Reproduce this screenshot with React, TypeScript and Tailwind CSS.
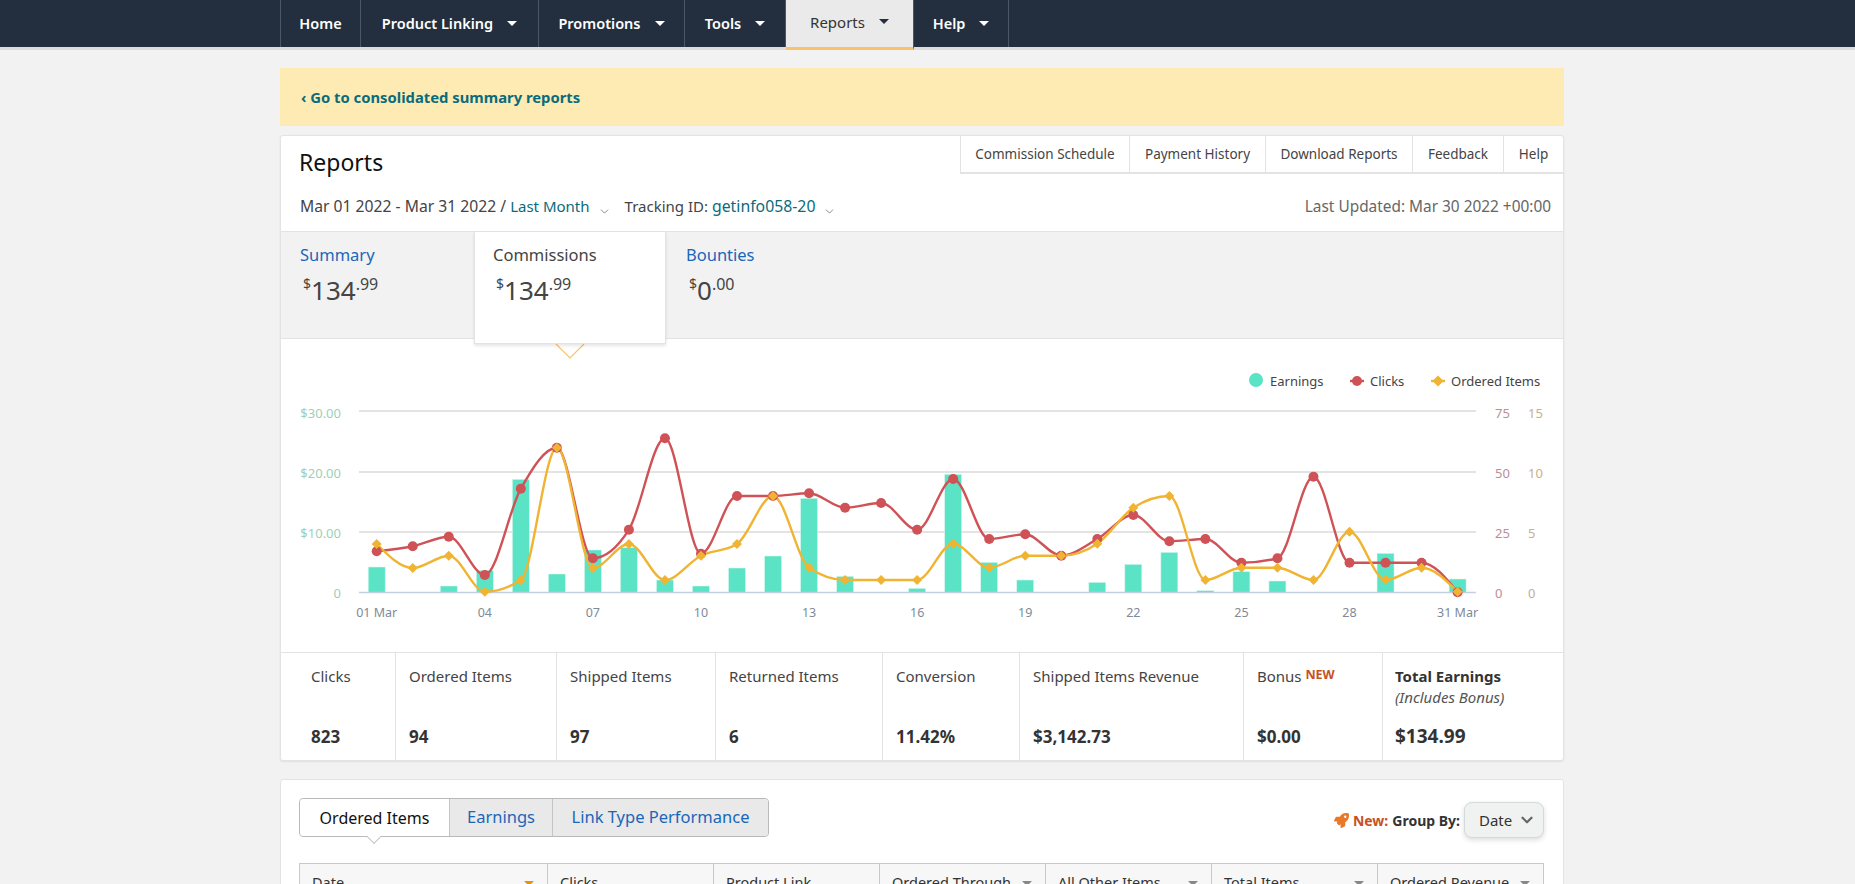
import { ChevronDown } from "lucide-react";
import { FaRocket } from "react-icons/fa";

const navItems = [
  { label: "Home", width: "w-[80px]", caret: false },
  { label: "Product Linking", width: "w-[178px]", caret: true },
  { label: "Promotions", width: "w-[146px]", caret: true },
  { label: "Tools", width: "w-[101px]", caret: true },
  { label: "Reports", width: "w-[128px]", caret: true, active: true },
  { label: "Help", width: "w-[95px]", caret: true },
];

const stats = [
  { label: "Clicks", value: "823", pad: "pl-[30px]" },
  { label: "Ordered Items", value: "94", pad: "pl-[13px]" },
  { label: "Shipped Items", value: "97", pad: "pl-[13px]" },
  { label: "Returned Items", value: "6", pad: "pl-[13px]" },
  { label: "Conversion", value: "11.42%", pad: "pl-[13px]" },
  { label: "Shipped Items Revenue", value: "$3,142.73", pad: "pl-[13px]" },
];

const tableHeads = [
  { label: "Date", width: "w-[248px]", caret: "border-t-[#e6920c]" },
  { label: "Clicks", width: "w-[166px]" },
  { label: "Product Link", width: "w-[166px]" },
  { label: "Ordered Through", width: "w-[166px]", caret: "border-t-[#888]" },
  { label: "All Other Items", width: "w-[166px]", caret: "border-t-[#888]" },
  { label: "Total Items", width: "w-[166px]", caret: "border-t-[#888]" },
  { label: "Ordered Revenue", width: "flex-1", caret: "border-t-[#888]" },
];

// chart numbers are in page pixels, the svg viewBox starts at the chart's corner
const dayX = (i: number) => 376.7 + i * 36.03;
const BASE = 592.3;

const bars = [25.3, 0, 6.3, 22, 113, 18.3, 42.3, 44.7, 12.3, 6.3, 24.3, 36.3, 94, 16, 0, 4, 118, 30, 12.3, 0, 10, 28, 40, 1.7, 20.7, 11.3, 0, 0, 39, 0, 13.3];
const clicks = [551.3, 546.3, 536.7, 575, 488.7, 447.7, 558.3, 529.7, 438.3, 553.7, 496, 496, 493.3, 507.7, 503, 529.7, 479, 539, 534.3, 555.7, 539, 515, 541.3, 539, 562.7, 558.3, 476.7, 562.7, 562.7, 562.7, 592.3];
const ordered = [544, 568, 555.7, 591.7, 580, 447.7, 568, 544, 580, 555.7, 544, 496, 567.7, 580, 580, 580, 543.7, 567.7, 555.7, 555.7, 543.7, 507.7, 496, 580, 567.7, 567.7, 580, 531.7, 580, 567.7, 591.7];

const grid = [411, 472, 532];
const leftAxis = [
  { y: 418, text: "$30.00" },
  { y: 478, text: "$20.00" },
  { y: 538, text: "$10.00" },
  { y: 598, text: "0" },
];
const rightAxis = [
  { y: 418, a: "75", b: "15" },
  { y: 478, a: "50", b: "10" },
  { y: 538, a: "25", b: "5" },
  { y: 598, a: "0", b: "0" },
];
const xLabels = [
  { i: 0, text: "01 Mar" },
  { i: 3, text: "04" },
  { i: 6, text: "07" },
  { i: 9, text: "10" },
  { i: 12, text: "13" },
  { i: 15, text: "16" },
  { i: 18, text: "19" },
  { i: 21, text: "22" },
  { i: 24, text: "25" },
  { i: 27, text: "28" },
  { i: 30, text: "31 Mar" },
];

function monotonePath(ys: number[]) {
  const h = 36.03;
  const slopes = ys.map((y, i) => {
    if (i === 0 || i === ys.length - 1) return 0;
    const s0 = (y - ys[i - 1]) / h;
    const s1 = (ys[i + 1] - y) / h;
    const p = (s0 + s1) / 2;
    return (Math.sign(s0) + Math.sign(s1)) * Math.min(Math.abs(s0), Math.abs(s1), 0.5 * Math.abs(p)) || 0;
  });
  slopes[0] = (3 * (ys[1] - ys[0]) / h - slopes[1]) / 2;
  const n = ys.length - 1;
  slopes[n] = (3 * (ys[n] - ys[n - 1]) / h - slopes[n - 1]) / 2;
  let d = `M${dayX(0)},${ys[0]}`;
  for (let i = 0; i < n; i++) {
    const dx = h / 3;
    d += `C${dayX(i) + dx},${ys[i] + dx * slopes[i]} ${dayX(i + 1) - dx},${ys[i + 1] - dx * slopes[i + 1]} ${dayX(i + 1)},${ys[i + 1]}`;
  }
  return d;
}

function diamond(x: number, y: number, r: number) {
  return `${x},${y - r} ${x + r},${y} ${x},${y + r} ${x - r},${y}`;
}

function Chart() {
  return (
    <svg viewBox="281 339 1282 313" className="block w-[1282px] h-[313px]" fontFamily="'Noto Sans', sans-serif">
      {/* legend */}
      <circle cx="1256" cy="380" r="7" fill="#5ae3c4" />
      <text x="1270" y="386" fontSize="13" fill="#444">Earnings</text>
      <line x1="1350" x2="1364" y1="381" y2="381" stroke="#cf5256" strokeWidth="2.4" />
      <circle cx="1357" cy="381" r="5" fill="#cf5256" />
      <text x="1370" y="386" fontSize="13" fill="#444">Clicks</text>
      <line x1="1431" x2="1445" y1="381" y2="381" stroke="#f0b432" strokeWidth="2.4" />
      <polygon points={diamond(1438, 381, 5.5)} fill="#f0b432" />
      <text x="1451" y="386" fontSize="13" fill="#444">Ordered Items</text>

      {/* grid */}
      {grid.map((y) => (
        <line key={y} x1="359" x2="1476" y1={y} y2={y} stroke="#dadada" strokeWidth="1.5" />
      ))}

      {/* bars */}
      {bars.map((b, i) =>
        b > 0 ? <rect key={i} x={dayX(i) - 8.5} y={BASE - b} width="17" height={b} fill="#5ae3c4" stroke="#d8f7ef" strokeWidth="0.6" /> : null
      )}
      <line x1="359" x2="1476" y1="592.5" y2="592.5" stroke="#c3d0e2" strokeWidth="1.5" />

      {/* lines */}
      <path d={monotonePath(clicks)} fill="none" stroke="#cf5256" strokeWidth="2.4" />
      <path d={monotonePath(ordered)} fill="none" stroke="#f0b432" strokeWidth="2.4" />
      {clicks.map((y, i) => (
        <circle key={i} cx={dayX(i)} cy={y} r="5" fill="#cf5256" />
      ))}
      {ordered.map((y, i) => (
        <polygon key={i} points={diamond(dayX(i), y, 5)} fill="#f0b432" />
      ))}

      {/* axes */}
      {leftAxis.map((l) => (
        <text key={l.text} x="341" y={l.y} textAnchor="end" fontSize="13" fill="#9dcfba">{l.text}</text>
      ))}
      {rightAxis.map((r) => (
        <g key={r.y}>
          <text x="1495" y={r.y} fontSize="13" fill="#b98f95">{r.a}</text>
          <text x="1528" y={r.y} fontSize="13" fill="#c9ae8f">{r.b}</text>
        </g>
      ))}
      {xLabels.map((l) => (
        <text key={l.text} x={dayX(l.i)} y="617" textAnchor="middle" fontSize="12.5" fill="#808a98">{l.text}</text>
      ))}
    </svg>
  );
}

function Money({ whole, cents }: { whole: string; cents: string }) {
  return (
    <div className="flex items-start text-[#444] mt-[2px]">
      <span className="text-[14px] leading-[20px] mt-[4px]">$</span>
      <span className="text-[26px] leading-[36px] mt-[2px]">{whole}</span>
      <span className="text-[16px] leading-[20px] mt-[4px]">.{cents}</span>
    </div>
  );
}

function Caret({ className }: { className: string }) {
  return <span className={"inline-block w-0 h-0 border-x-[5px] border-x-transparent border-t-[5px] " + className} />;
}

export default function App() {
  return (
    <div className="h-[884px] overflow-hidden bg-[#f2f2f2] font-['Noto_Sans',sans-serif] text-[#333]">
      {/* Top nav */}
      <div className="bg-[#232f3e] h-[50px] border-b-[3px] border-b-[#dcdcdc]">
        <div className="ml-[280px] flex h-[47px] border-l border-l-[#4b5867]">
          {navItems.map((item) => (
            <div
              key={item.label}
              className={
                item.width +
                " flex items-center justify-center gap-[14px] border-r border-r-[#4b5867] " +
                (item.active
                  ? "bg-[#eaeaea] text-[#333] text-[15px] h-[50px] border-b-[3px] border-b-[#f7c26b] relative pb-[3px]"
                  : "text-white text-[14.5px] font-semibold")
              }
            >
              <span>{item.label}</span>
              {item.caret && (
                <Caret className={(item.active ? "border-t-[#232f3e]" : "border-t-white") + " -mt-[1px]"} />
              )}
            </div>
          ))}
        </div>
      </div>

      <div className="ml-[280px] w-[1284px] pt-[18px]">
        {/* Banner */}
        <div className="h-[58px] bg-[#feebb3] flex items-center pl-[21px] text-[14.8px] font-bold text-[#0a6b7c]">
          ‹ Go to consolidated summary reports
        </div>

        {/* Main card */}
        <div className="mt-[9px] bg-white border border-[#e3e3e3] rounded-[3px] shadow-[0_1px_2px_rgba(0,0,0,0.08)]">
          <div className="h-[95px]">
            <div className="flex justify-between">
              <h1 className="pl-[18px] pt-[8px] text-[23px] leading-[36px] text-[#111]">Reports</h1>
              <div className="flex h-[38px] border-l border-b-2 border-[#e3e3e3] text-[13.5px] text-[#444]">
                <div className="w-[169px] flex items-center justify-center border-r border-[#e3e3e3]">Commission Schedule</div>
                <div className="w-[136px] flex items-center justify-center border-r border-[#e3e3e3]">Payment History</div>
                <div className="w-[147px] flex items-center justify-center border-r border-[#e3e3e3]">Download Reports</div>
                <div className="w-[91px] flex items-center justify-center border-r border-[#e3e3e3]">Feedback</div>
                <div className="w-[59px] flex items-center justify-center">Help</div>
              </div>
            </div>
            <div className="flex justify-between items-baseline pl-[19px] pr-[12px] mt-[15px] text-[15px] text-[#444]">
              <div className="flex items-baseline">
                <span className="text-[15.7px]">Mar 01 2022 - Mar 31 2022 / </span>
                <span className="ml-[4px] text-[#0a6b7c]">Last Month</span>
                <ChevronDown size={13} strokeWidth={1.8} className="ml-[8px] self-end mb-[1px] text-[#888]" />
                <span className="ml-[14px]">Tracking ID: </span>
                <span className="ml-[4px] text-[15.8px] text-[#0a6b7c]">getinfo058-20</span>
                <ChevronDown size={13} strokeWidth={1.8} className="ml-[8px] self-end mb-[1px] text-[#888]" />
              </div>
              <div className="text-[15.4px] text-[#666]">Last Updated: Mar 30 2022 +00:00</div>
            </div>
          </div>

          {/* Summary tabs */}
          <div className="relative flex h-[108px] bg-[#f2f2f2] border-y border-[#e3e3e3]">
            <div className="w-[193px] pl-[19px] pt-[11px]">
              <div className="text-[16.5px] text-[#1a66b8]">Summary</div>
              <div className="pl-[3px]"><Money whole="134" cents="99" /></div>
            </div>
            <div className="relative z-10 w-[192px] h-[113px] -mt-px bg-white border border-[#e3e3e3] shadow-[0_2px_3px_rgba(0,0,0,0.1)] pl-[18px] pt-[11px]">
              <div className="text-[16.5px] text-[#444]">Commissions</div>
              <div className="pl-[3px]"><Money whole="134" cents="99" /></div>
            </div>
            <div className="w-[193px] pl-[20px] pt-[11px]">
              <div className="text-[16.5px] text-[#1a66b8]">Bounties</div>
              <div className="pl-[3px]"><Money whole="0" cents="00" /></div>
            </div>
            <svg width="30" height="16" className="absolute left-[274px] top-[112px] z-0">
              <path d="M1 0 L15 14 L29 0" fill="none" stroke="#f7c26b" strokeWidth="1.2" />
            </svg>
          </div>

          <Chart />

          {/* Totals row */}
          <div className="grid grid-cols-[115px_161px_159px_167px_137px_224px_139px_1fr] h-[108px] border-t border-[#e3e3e3]">
            {stats.map((s) => (
              <div key={s.label} className={s.pad + " border-r border-[#e3e3e3] pt-[13px]"}>
                <div className="text-[15px] leading-[20px] text-[#444]">{s.label}</div>
                <div className="mt-[39px] text-[17px] leading-[24px] font-bold text-[#333]">{s.value}</div>
              </div>
            ))}
            <div className="border-r border-[#e3e3e3] pl-[13px] pt-[13px]">
              <div className="text-[15px] leading-[20px] text-[#444]">
                Bonus <span className="relative -top-[3px] text-[12.5px] leading-none font-bold text-[#c7511f]">NEW</span>
              </div>
              <div className="mt-[39px] text-[17px] leading-[24px] font-bold text-[#333]">$0.00</div>
            </div>
            <div className="pl-[12px] pt-[13px]">
              <div className="text-[15px] leading-[20px] font-bold text-[#333]">Total Earnings</div>
              <div className="text-[15px] leading-[22px] italic text-[#555]">(Includes Bonus)</div>
              <div className="mt-[15px] text-[19px] leading-[26px] font-bold text-[#333]">$134.99</div>
            </div>
          </div>
        </div>

        {/* Detail card */}
        <div className="mt-[18px] bg-white border border-[#e3e3e3] rounded-[3px] pl-[18px] pr-[19px] pt-[18px] pb-[40px]">
          <div className="flex justify-between">
            <div className="relative flex h-[39px] w-[470px] border border-[#b9b9b9] rounded-[4px] text-[16px]">
              <div className="w-[149px] flex items-center justify-center bg-white text-[#111] rounded-l-[4px]">Ordered Items</div>
              <div className="w-[103px] flex items-center justify-center bg-[#e9e9e9] text-[16.5px] text-[#1a66b8] border-l border-[#c4c4c4]">Earnings</div>
              <div className="flex-1 flex items-center justify-center bg-[#e9e9e9] text-[16.5px] text-[#1a66b8] border-l border-[#c4c4c4] rounded-r-[4px]">Link Type Performance</div>
              <span className="absolute left-[69px] top-[33px] w-[10px] h-[10px] rotate-45 bg-white border-r border-b border-[#c4c4c4]" />
            </div>
            <div className="flex items-center h-[36px] mt-[4px] text-[14px]">
              <FaRocket size={15} className="text-[#e8792a] mr-[4px]" />
              <span className="font-bold text-[#c7511f]">New:</span>
              <span className="ml-[4px] font-bold text-[#333]">Group By:</span>
              <div className="ml-[4px] w-[80px] h-[36px] flex items-center justify-between pl-[14px] pr-[7px] bg-[#f0f2f2] border border-[#d5d9d9] rounded-[8px] shadow-[0_2px_5px_rgba(15,17,17,0.15)] text-[15px] text-[#333]">
                Date
                <ChevronDown size={18} strokeWidth={3} className="text-[#666]" />
              </div>
            </div>
          </div>

          {/* Table head, mostly below the fold */}
          <div className="mt-[25px] flex h-[40px] border border-[#c9c9c9] bg-[#f7f7f7] text-[14.5px] text-[#333]">
            {tableHeads.map((h) => (
              <div key={h.label} className={h.width + " flex items-center justify-between pl-[12px] pr-[13px] border-r border-[#c9c9c9] last:border-r-0"}>
                <span>{h.label}</span>
                {h.caret && <Caret className={h.caret} />}
              </div>
            ))}
          </div>
        </div>
      </div>
    </div>
  );
}
